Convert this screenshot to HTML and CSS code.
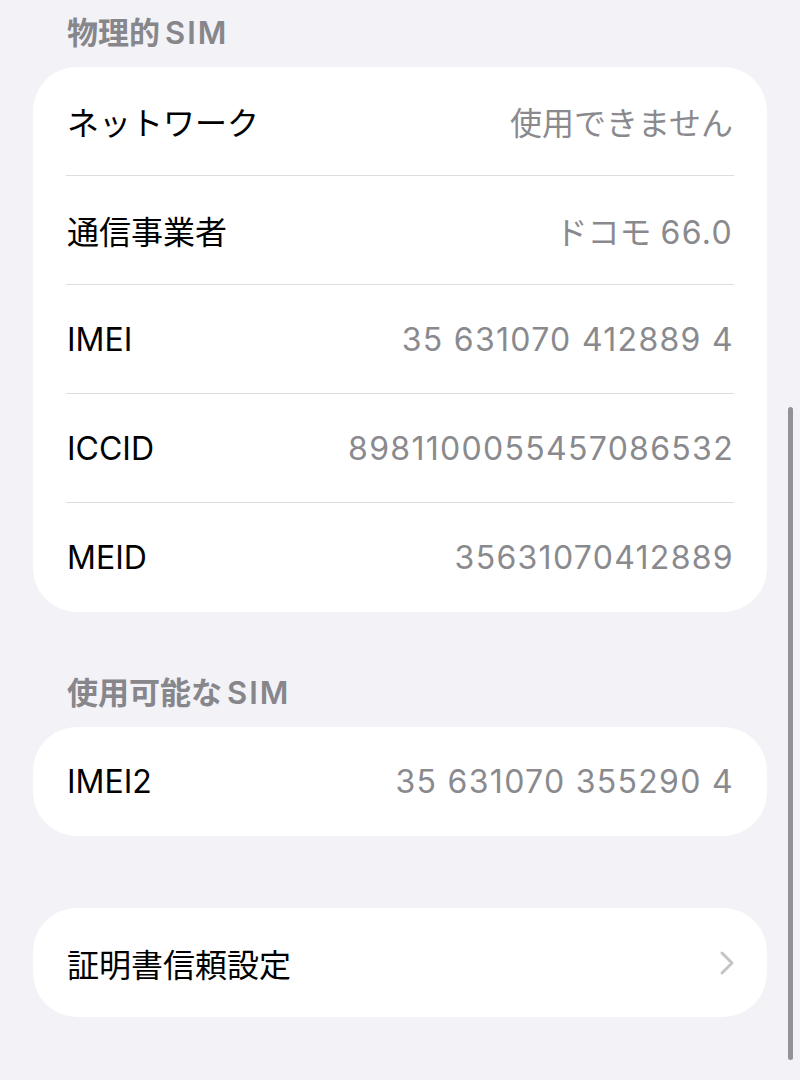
FILE: index.html
```html
<!DOCTYPE html>
<html lang="ja">
<head>
<meta charset="utf-8">
<link rel="stylesheet" href="styles.css">
</head>
<body>
<div class="page">
  <div class="section-header first">物理的<span class="latin">SIM</span></div>
  <div class="card">
    <div class="row"><span class="label">ネットワーク</span><span class="value">使用できません</span></div>
    <div class="row"><span class="label">通信事業者</span><span class="value">ドコモ <span class="num">66.0</span></span></div>
    <div class="row"><span class="label">IMEI</span><span class="value num">35 631070 412889 4</span></div>
    <div class="row"><span class="label">ICCID</span><span class="value num">8981100055457086532</span></div>
    <div class="row"><span class="label">MEID</span><span class="value num">35631070412889</span></div>
  </div>
  <div class="section-header">使用可能な<span class="latin">SIM</span></div>
  <div class="card">
    <div class="row"><span class="label">IMEI2</span><span class="value num">35 631070 355290 4</span></div>
  </div>
  <div class="card standalone">
    <div class="row"><span class="label">証明書信頼設定</span>
      <svg class="chevron" width="16" height="26" viewBox="0 0 16 26"><polyline points="3,3 13,13 3,23" fill="none" stroke="#c4c4c7" stroke-width="3" stroke-linecap="round" stroke-linejoin="round"/></svg>
    </div>
  </div>
</div>
<div class="scroll-indicator"></div>
</body>
</html>
```
FILE: styles.css
```css
html, body {
  margin: 0;
  padding: 0;
  background: #f2f2f7;
}
body {
  width: 800px;
  height: 1080px;
  overflow: hidden;
  font-family: Inter, "Noto Sans CJK JP", sans-serif;
  -webkit-font-smoothing: antialiased;
}
.page {
  padding: 0 33px;
}
.section-header {
  margin-top: 61px;
  padding-left: 34px;
  height: 40px;
  line-height: 40px;
  font-size: 31px;
  font-weight: 600;
  color: #86868b;
}
.section-header.first {
  margin-top: 13px;
}
.section-header .latin {
  margin-left: 5px;
  letter-spacing: 2px;
}
.card {
  margin-top: 14px;
  background: #ffffff;
  border-radius: 44px;
  overflow: hidden;
}
.card.standalone {
  margin-top: 72px;
}
.row {
  margin: 0 33px;
  padding: 0 1px;
  height: 108px;
  border-bottom: 1px solid #dedee2;
  display: flex;
  align-items: center;
  justify-content: space-between;
  font-size: 32px;
}
.row:last-child {
  border-bottom: none;
  height: 109px;
}
.label {
  color: #000000;
}
.value {
  color: #8a8a8e;
}
.num {
  letter-spacing: 1.3px;
}
.value.num {
  margin-right: -1px;
}
.chevron {
  margin-right: -2px;
}
.scroll-indicator {
  position: absolute;
  left: 788px;
  top: 407px;
  width: 5px;
  height: 653px;
  border-radius: 3px;
  background: #929297;
}
```
